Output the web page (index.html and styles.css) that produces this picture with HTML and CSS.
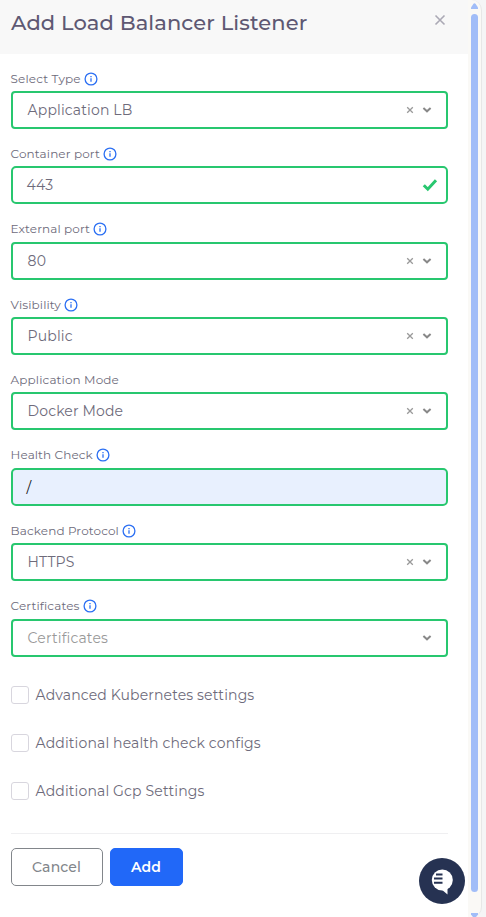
FILE: index.html
```html
<!DOCTYPE html>
<html lang="en">
<head>
<meta charset="utf-8">
<title>Add Load Balancer Listener</title>
<link rel="stylesheet" href="styles.css">
</head>
<body>
<svg class="defs" width="0" height="0">
  <symbol id="info" viewBox="0 0 14 14"><circle cx="7" cy="7" r="5.9" fill="none" stroke="currentColor" stroke-width="1.3"/><path d="M7 6.2v3.6M7 4v1.3" stroke="currentColor" stroke-width="1.3" fill="none"/></symbol>
  <symbol id="clear" viewBox="0 0 8 8"><path d="M1.2 1.2l5.6 5.6M6.8 1.2L1.2 6.8" stroke="currentColor" stroke-width="1.3" fill="none"/></symbol>
  <symbol id="chevron" viewBox="0 0 10 6"><path d="M1.4 1.1L5 4.3l3.6-3.2" stroke="currentColor" stroke-width="2" fill="none"/></symbol>
</svg>
<div class="panel">
  <main class="content">
    <header class="header">
      <h1>Add Load Balancer Listener</h1>
      <svg class="close" viewBox="0 0 12 12"><path d="M1.5 1.5l9 9M10.5 1.5l-9 9" stroke="currentColor" stroke-width="1.6"/></svg>
    </header>
    <form class="form">
      <div class="field">
        <label class="label"><span>Select Type</span><svg class="info"><use href="#info"/></svg></label>
        <div class="control"><span class="value">Application LB</span><svg class="clear"><use href="#clear"/></svg><svg class="chevron"><use href="#chevron"/></svg></div>
      </div>
      <div class="field">
        <label class="label"><span>Container port</span><svg class="info"><use href="#info"/></svg></label>
        <div class="control input"><span class="value">443</span><svg class="check" viewBox="0 0 16 14"><path d="M1.8 7.2l4 4L14 2.2" fill="none" stroke="currentColor" stroke-width="3"/></svg></div>
      </div>
      <div class="field">
        <label class="label"><span>External port</span><svg class="info"><use href="#info"/></svg></label>
        <div class="control"><span class="value">80</span><svg class="clear"><use href="#clear"/></svg><svg class="chevron"><use href="#chevron"/></svg></div>
      </div>
      <div class="field">
        <label class="label"><span>Visibility</span><svg class="info"><use href="#info"/></svg></label>
        <div class="control"><span class="value">Public</span><svg class="clear"><use href="#clear"/></svg><svg class="chevron"><use href="#chevron"/></svg></div>
      </div>
      <div class="field">
        <label class="label"><span>Application Mode</span></label>
        <div class="control"><span class="value">Docker Mode</span><svg class="clear"><use href="#clear"/></svg><svg class="chevron"><use href="#chevron"/></svg></div>
      </div>
      <div class="field">
        <label class="label"><span>Health Check</span><svg class="info"><use href="#info"/></svg></label>
        <div class="control input autofill"><span class="value">/</span></div>
      </div>
      <div class="field">
        <label class="label"><span>Backend Protocol</span><svg class="info"><use href="#info"/></svg></label>
        <div class="control"><span class="value">HTTPS</span><svg class="clear"><use href="#clear"/></svg><svg class="chevron"><use href="#chevron"/></svg></div>
      </div>
      <div class="field">
        <label class="label"><span>Certificates</span><svg class="info"><use href="#info"/></svg></label>
        <div class="control"><span class="value placeholder">Certificates</span><svg class="chevron"><use href="#chevron"/></svg></div>
      </div>
      <div class="options">
        <label class="option"><i class="box"></i><span>Advanced Kubernetes settings</span></label>
        <label class="option"><i class="box"></i><span>Additional health check configs</span></label>
        <label class="option"><i class="box"></i><span>Additional Gcp Settings</span></label>
      </div>
      <div class="actions">
        <button type="button" class="btn cancel">Cancel</button>
        <button type="button" class="btn add">Add</button>
      </div>
    </form>
  </main>
  <div class="scrollbar">
    <svg class="arrow" viewBox="0 0 7 6"><path d="M0 6V4.5L2.5 .8Q3.5-.4 4.5 .8L7 4.5V6z" fill="currentColor"/></svg>
    <div class="thumb"></div>
    <svg class="arrow down" viewBox="0 0 7 4"><path d="M0 0h7v1.5L5 4H2L0 1.5z" fill="currentColor"/></svg>
  </div>
</div>
<svg class="chat" viewBox="0 0 46 46"><circle cx="23" cy="23" r="23" fill="#263252"/><circle cx="23.3" cy="22" r="10.5" fill="#fff"/><path d="M22 31l6.5 5.5V29z" fill="#fff"/><path d="M17 16.5h6.5M15 20.5h8.5M15 24.7h8.5" stroke="#263252" stroke-width="2"/></svg>
</body>
</html>
```
FILE: styles.css
```css
* { box-sizing: border-box; }
body { margin: 0; height: 917px; overflow: hidden; background: #f5f5f6; font-family: Montserrat, Inter, "Liberation Sans", sans-serif; letter-spacing: .14px; color: #6e6b7b; }
svg { display: block; flex: none; }
.defs { position: absolute; }
.panel { display: flex; width: 482px; height: 917px; background: #faf9f6; border-right: 1px solid #e7e7e7; border-radius: 0 10px 10px 0; }
.content { width: 468px; background: #fff; }
.header { display: flex; justify-content: space-between; height: 54px; padding: 8px 22px 0 11px; background: #f8f8f8; }
h1 { margin: 0; font-size: 21px; line-height: 29px; font-weight: 500; letter-spacing: .11px; color: #5e5873; white-space: nowrap; }
.close { width: 12px; height: 12px; margin-top: 6px; color: #aba9b5; }
.form { padding: 15.6px 20px 0 10.6px; }
.field { height: 75.36px; }
.label { display: flex; align-items: center; gap: 3px; height: 18px; margin-bottom: 3.42px; font-size: 12px; line-height: 18px; letter-spacing: .12px; white-space: nowrap; }
.info { width: 14px; height: 14px; color: #2b6ff3; }
.control { display: flex; align-items: center; height: 38px; padding: 0 14px 0 15px; border: 2px solid #28c76f; border-radius: 4px; background: #fff; }
.input { padding-left: 14px; padding-right: 8px; border-radius: 5px; }
.value { flex: 1; font-size: 14px; line-height: 20px; color: #6e6b7b; }
.placeholder { color: #999; }
.clear { width: 8px; height: 8px; margin-right: 8px; color: #999; }
.chevron { width: 10px; height: 6px; color: #888; }
.check { width: 16px; height: 14px; color: #28c76f; }
.autofill { background: #e8f0fe; }
.autofill .value { color: #111; }
.options { display: flex; flex-direction: column; gap: 30px; padding-top: 13.5px; }
.option { display: flex; align-items: center; gap: 7px; height: 18px; font-size: 14px; white-space: nowrap; }
.box { width: 18px; height: 18px; border: 1px solid #d8d6de; border-radius: 3px; background: #fff; }
.actions { display: flex; gap: 7px; margin-top: 33px; padding-top: 14px; border-top: 1px solid #efeff1; }
.btn { height: 38px; padding: 0; border: 1px solid #82868b; border-radius: 5px; background: #fff; font: 500 14px/20px Montserrat, Inter, sans-serif; letter-spacing: .14px; color: #82868b; }
.cancel { width: 92px; }
.add { width: 73px; border-color: #2168f8; background: #2168f8; color: #fff; font-weight: 600; }
.scrollbar { display: flex; flex-direction: column; align-items: center; width: 13px; padding-top: 3px; color: #a1bdf8; }
.arrow { width: 7px; height: 6px; margin-bottom: 5px; }
.thumb { width: 7px; height: 878px; flex: none; border-radius: 4px; background: #a1bdf8; }
.down { height: 4px; margin: 21px 0 0; }
.chat { position: absolute; left: 419px; top: 858px; width: 46px; height: 46px; }
```
